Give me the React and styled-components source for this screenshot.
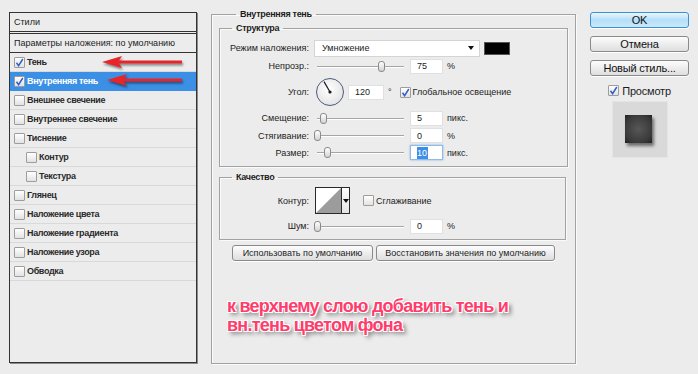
import styled, { createGlobalStyle } from "styled-components"

const GlobalStyle = createGlobalStyle`
  html, body {
    margin: 0;
    background: #ececec;
  }
  body {
    font-family: "Liberation Sans", Arial, sans-serif;
    font-size: 9px;
    color: #1c1c1c;
  }
  * {
    box-sizing: border-box;
  }
`

const effects = [
  { name: "Тень", checked: true },
  { name: "Внутренняя тень", checked: true, active: true },
  { name: "Внешнее свечение" },
  { name: "Внутреннее свечение" },
  { name: "Тиснение" },
  { name: "Контур", sub: true },
  { name: "Текстура", sub: true },
  { name: "Глянец" },
  { name: "Наложение цвета" },
  { name: "Наложение градиента" },
  { name: "Наложение узора" },
  { name: "Обводка" },
]

const arrowPath = (x, y, tail) =>
  `M${x} ${y} L${x + 20} ${y - 6} L${x + 17} ${y - 1.6} L${tail} ${y - 1.4} L${tail} ${y + 1.4} L${x + 17} ${y + 1.6} L${x + 20} ${y + 6} Z`

const Check = ({ checked }) => (
  <Box>
    {checked && (
      <svg width="9" height="9" viewBox="0 0 9 9">
        <path d="M1.5 4.8 L3.6 7.6 L7.8 1" fill="none" stroke="#2f5fc4" strokeWidth="1.5" />
      </svg>
    )}
  </Box>
)

const Slider = ({ pos }) => (
  <Track>
    <Thumb $pos={pos} />
  </Track>
)

const App = () => {
  return (
    <Dialog>
      <GlobalStyle />
      <StylesPanel>
        <PanelHead>Стили</PanelHead>
        <ParamsRow>Параметры наложения: по умолчанию</ParamsRow>
        {effects.map((e) => (
          <EffectRow key={e.name} $active={e.active} $sub={e.sub}>
            <Check checked={e.checked} />
            <span>{e.name}</span>
          </EffectRow>
        ))}
        <Arrows viewBox="0 0 186 100">
          <path d={arrowPath(92, 49, 172)} />
          <path d={arrowPath(97, 67, 172)} />
        </Arrows>
      </StylesPanel>

      <Middle>
        <Group $h={356}>
          <Legend $indent={24}>Внутренняя тень</Legend>
          <OuterBody>
            <Group>
              <Legend $indent={12}>Структура</Legend>
              <GroupBody $top={5} $bottom={5}>
                <Row $h={18}>
                  <Label>Режим наложения:</Label>
                  <Select>
                    <span>Умножение</span>
                    <Caret />
                  </Select>
                  <Swatch />
                </Row>
                <Row $h={18}>
                  <Label>Непрозр.:</Label>
                  <Slider pos={64} />
                  <Input>75</Input>
                  <Unit>%</Unit>
                </Row>
                <Row $h={34}>
                  <Label>Угол:</Label>
                  <Dial>
                    <svg width="28" height="28" viewBox="0 0 28 28">
                      <line x1="14" y1="14" x2="8" y2="3.6" stroke="#1a1a1a" strokeWidth="1.2" />
                      <circle cx="14" cy="14" r="1.6" fill="#1a1a1a" />
                    </svg>
                  </Dial>
                  <Input $w={36}>120</Input>
                  <Unit>°</Unit>
                  <CheckLabel $gap={8}>
                    <Check checked />
                    <span>Глобальное освещение</span>
                  </CheckLabel>
                </Row>
                <Row $h={18}>
                  <Label>Смещение:</Label>
                  <Slider pos={6} />
                  <Input>5</Input>
                  <Unit>пикс.</Unit>
                </Row>
                <Row $h={17}>
                  <Label>Стягивание:</Label>
                  <Slider pos={0} />
                  <Input>0</Input>
                  <Unit>%</Unit>
                </Row>
                <Row $h={17}>
                  <Label>Размер:</Label>
                  <Slider pos={10} />
                  <Input $focused>
                    <Selected>10</Selected>
                  </Input>
                  <Unit>пикс.</Unit>
                </Row>
              </GroupBody>
            </Group>

            <Group $mt={4} $mr={2}>
              <Legend $indent={12}>Качество</Legend>
              <GroupBody $top={4} $bottom={3}>
                <Row $h={27}>
                  <Label>Контур:</Label>
                  <ContourPicker>
                    <svg width="25" height="25" viewBox="0 0 25 25">
                      <rect width="25" height="25" fill="#fff" />
                      <path d="M0 25 L25 0 L25 25 Z" fill="#9c9c9c" />
                    </svg>
                    <PickerArrow>
                      <Caret />
                    </PickerArrow>
                  </ContourPicker>
                  <CheckLabel $gap={13}>
                    <Check />
                    <span>Сглаживание</span>
                  </CheckLabel>
                </Row>
                <Row $h={20} $mt={2}>
                  <Label>Шум:</Label>
                  <Slider pos={0} />
                  <Input>0</Input>
                  <Unit>%</Unit>
                </Row>
              </GroupBody>
            </Group>

            <ButtonRow>
              <SmallButton $w={141}>Использовать по умолчанию</SmallButton>
              <SmallButton $w={179}>Восстановить значения по умолчанию</SmallButton>
            </ButtonRow>

            <Note>
              к верхнему слою добавить тень и
              <br />
              вн.тень цветом фона
            </Note>
          </OuterBody>
        </Group>
      </Middle>

      <Side>
        <SideButton $primary>OK</SideButton>
        <SideButton>Отмена</SideButton>
        <SideButton>Новый стиль...</SideButton>
        <PreviewToggle>
          <Check checked />
          <span>Просмотр</span>
        </PreviewToggle>
        <Preview>
          <PreviewSquare />
        </Preview>
      </Side>
    </Dialog>
  )
}

export default App

const Dialog = styled.div`
  display: flex;
  align-items: flex-start;
  width: 698px;
  height: 374px;
  padding: 8px 0 0 9px;
`

const StylesPanel = styled.div`
  position: relative;
  width: 188px;
  height: 351px;
  margin-top: 4px;
  border: 1px solid #333;
  box-shadow: 1px 1px 0 #8c8c8c;
`

const PanelHead = styled.div`
  display: flex;
  align-items: center;
  height: 21px;
  padding-left: 4px;
  border-bottom: 3px double #333;
`

const ParamsRow = styled.div`
  display: flex;
  align-items: center;
  height: 19px;
  padding-left: 4px;
  border-bottom: 1px solid #333;
`

const EffectRow = styled.div`
  display: flex;
  align-items: center;
  gap: 2px;
  height: 19px;
  padding-left: ${(p) => (p.$sub ? 16 : 4)}px;
  border-bottom: 1px solid ${(p) => (p.$active ? "#3b8fe5" : "#d9d9d9")};
  background: ${(p) => (p.$active ? "#3b8fe5" : "transparent")};
  color: ${(p) => (p.$active ? "#fff" : "#2a2a2a")};
  font-weight: bold;
  letter-spacing: -0.35px;
`

const Box = styled.span`
  display: inline-flex;
  align-items: center;
  justify-content: center;
  flex-shrink: 0;
  width: 11px;
  height: 11px;
  border: 1px solid #9d9d9d;
  border-radius: 1px;
  background: linear-gradient(#ffffff, #e2e2e2);
`

const Arrows = styled.svg`
  position: absolute;
  left: 0;
  top: 0;
  width: 186px;
  height: 100px;
  overflow: visible;
  pointer-events: none;
  fill: #e8262a;
  filter: drop-shadow(1px 2px 1.2px rgba(0, 0, 0, 0.45));
`

const Middle = styled.div`
  width: 365px;
  margin-left: 14px;
`

const Group = styled.fieldset`
  margin: ${(p) => p.$mt || 0}px ${(p) => p.$mr || 0}px 0 0;
  padding: 0;
  height: ${(p) => (p.$h ? `${p.$h}px` : "auto")};
  min-width: 0;
  border: 1px solid #a2a2a2;
  box-shadow: inset 1px 1px 0 #fafafa, 1px 1px 0 #fafafa;
`

const Legend = styled.legend`
  margin-left: ${(p) => p.$indent}px;
  padding: 0 4px;
  font-weight: bold;
  line-height: 12px;
  letter-spacing: -0.3px;
`

const OuterBody = styled.div`
  display: flex;
  flex-direction: column;
  padding: 2px 7px 0 7px;
`

const GroupBody = styled.div`
  display: flex;
  flex-direction: column;
  padding: ${(p) => p.$top}px 0 ${(p) => p.$bottom}px 0;
`

const Row = styled.div`
  display: flex;
  align-items: center;
  height: ${(p) => p.$h}px;
  margin-top: ${(p) => p.$mt || 0}px;
`

const Label = styled.span`
  flex-shrink: 0;
  width: 89px;
  margin-right: 5px;
  text-align: right;
  white-space: nowrap;
`

const Select = styled.div`
  display: flex;
  align-items: center;
  justify-content: space-between;
  width: 166px;
  height: 17px;
  padding: 0 5px 0 7px;
  background: #fff;
  border: 1px solid #d4d4d4;
`

const Caret = styled.span`
  width: 0;
  height: 0;
  border-left: 3.5px solid transparent;
  border-right: 3.5px solid transparent;
  border-top: 4px solid #111;
`

const Swatch = styled.span`
  width: 26px;
  height: 13px;
  margin-left: 4px;
  background: #000;
  border: 1px solid #555;
`

const Track = styled.div`
  position: relative;
  flex-shrink: 0;
  width: 90px;
  height: 11px;
  &::before {
    content: "";
    position: absolute;
    left: 3px;
    right: 0;
    top: 5px;
    height: 1px;
    background: #a5a5a5;
    box-shadow: 0 1px 0 #fff;
  }
`

const Thumb = styled.span`
  position: absolute;
  top: 0;
  left: ${(p) => p.$pos}px;
  width: 7px;
  height: 11px;
  border: 1px solid #8a8a8a;
  border-radius: 3px;
  background: linear-gradient(#ffffff, #d2d2d2);
`

const Input = styled.div`
  display: flex;
  align-items: center;
  width: ${(p) => p.$w || 33}px;
  height: 15px;
  margin-left: ${(p) => (p.$w ? 4 : 6)}px;
  padding-left: 6px;
  background: #fff;
  border: 1px solid ${(p) => (p.$focused ? "#8fbbe8" : "#e0e0e0")};
  box-shadow: ${(p) => (p.$focused ? "0 0 2px #7fb1e6" : "none")};
`

const Selected = styled.span`
  background: #3d8ee6;
  color: #fff;
  padding-right: 1px;
  line-height: 12px;
`

const Unit = styled.span`
  margin-left: 4px;
`

const Dial = styled.span`
  display: flex;
  width: 28px;
  height: 28px;
  margin-left: 2px;
  border: 1.5px solid #4d5a7a;
  border-radius: 50%;
  background: radial-gradient(circle at 45% 40%, #ffffff, #e4e4e4 75%, #cfcfcf);
  svg {
    margin: -1.5px;
  }
`

const CheckLabel = styled.label`
  display: flex;
  align-items: center;
  gap: 2px;
  margin-left: ${(p) => p.$gap}px;
`

const ContourPicker = styled.div`
  display: flex;
  width: 35px;
  height: 27px;
  margin-left: 1px;
  border: 1px solid #2a2a2a;
  background: #fff;
`

const PickerArrow = styled.span`
  display: flex;
  align-items: center;
  justify-content: center;
  width: 8px;
  border-left: 1px solid #2a2a2a;
  background: linear-gradient(#ffffff, #e4e4e4);
`

const ButtonRow = styled.div`
  display: flex;
  gap: 3px;
  margin: 5px 0 0 13px;
`

const SmallButton = styled.button`
  width: ${(p) => p.$w}px;
  height: 16px;
  padding: 0;
  font-family: inherit;
  font-size: 9px;
  color: #1c1c1c;
  border: 1px solid #8a8a8a;
  border-radius: 3px;
  background: linear-gradient(#fdfdfd, #dedede);
  box-shadow: 0 1px 0 #fff;
`

const Note = styled.p`
  margin: 36px 0 0 8px;
  font-size: 18px;
  font-weight: bold;
  line-height: 19px;
  letter-spacing: -0.75px;
  color: #ff3d6c;
  text-shadow: -1px -1px 0 #fff, 1px -1px 0 #fff, -1px 1px 0 #fff, 1px 1px 0 #fff,
    3px 3px 4px rgba(0, 0, 0, 0.55);
`

const Side = styled.div`
  display: flex;
  flex-direction: column;
  align-items: center;
  width: 99px;
  margin: 4px 0 0 14px;
`

const SideButton = styled.button`
  width: 99px;
  height: 16px;
  margin-bottom: 8px;
  padding: 0;
  font-family: inherit;
  font-size: 11px;
  letter-spacing: -0.2px;
  color: #111;
  border: 1px solid ${(p) => (p.$primary ? "#3f8fd0" : "#8a8a8a")};
  border-radius: 3px;
  background: ${(p) =>
    p.$primary
      ? "linear-gradient(#e8f6fe, #b4dff9 50%, #cbe9fb)"
      : "linear-gradient(#fdfdfd, #dedede)"};
  box-shadow: 0 1px 0 #fff;
`

const PreviewToggle = styled.label`
  display: flex;
  align-items: center;
  gap: 3px;
  height: 13px;
  font-size: 11px;
  letter-spacing: -0.2px;
`

const Preview = styled.div`
  display: flex;
  align-items: center;
  justify-content: center;
  width: 56px;
  height: 57px;
  margin-top: 4px;
  background: #d9d9d9;
  border: 1px solid #e4e4e4;
`

const PreviewSquare = styled.div`
  width: 27px;
  height: 28px;
  margin: -1px 0 0 -2px;
  background: radial-gradient(circle at 50% 50%, #575757, #3a3a3a 70%, #222);
  box-shadow: 2px 3px 3px rgba(0, 0, 0, 0.5);
`
